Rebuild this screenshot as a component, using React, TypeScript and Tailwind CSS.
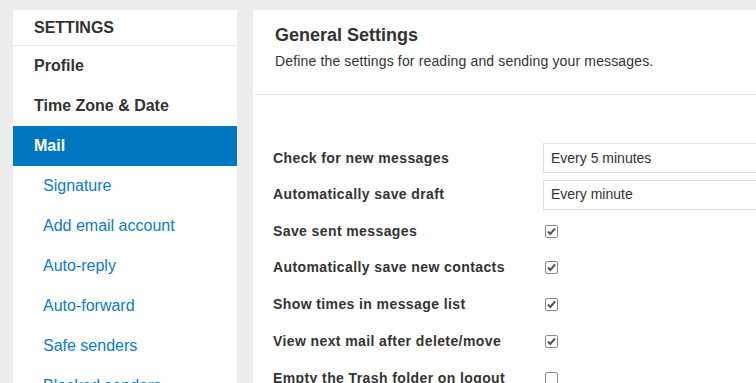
import React from "react";

const subItems = ["Signature", "Add email account", "Auto-reply", "Auto-forward", "Safe senders", "Blocked senders"];

function Check({ checked }: { checked: boolean }) {
  return (
    <div className="w-[13px] h-[13px] border border-[#8a8a8a] rounded-[2px] bg-white flex items-center justify-center">
      {checked && (
        <svg width="11" height="11" viewBox="0 0 11 11">
          <path d="M2 5.5 L4.3 8 L9 2.5" fill="none" stroke="#555" strokeWidth="2" />
        </svg>
      )}
    </div>
  );
}

export default function App() {
  const rows: { label: string; h: string; select?: string; checked?: boolean }[] = [
    { label: "Check for new messages", h: "h-[36px]", select: "Every 5 minutes" },
    { label: "Automatically save draft", h: "h-[37px]", select: "Every minute" },
    { label: "Save sent messages", h: "h-[36px]", checked: true },
    { label: "Automatically save new contacts", h: "h-[37px]", checked: true },
    { label: "Show times in message list", h: "h-[37px]", checked: true },
    { label: "View next mail after delete/move", h: "h-[37px]", checked: true },
    { label: "Empty the Trash folder on logout", h: "h-[37px]", checked: false },
  ];
  return (
    <div className="w-[756px] h-[383px] overflow-hidden bg-[#ececec] flex items-start pt-[10px] pl-[13px] gap-[16px] text-[#333]" style={{ fontFamily: '"Liberation Sans", Arial, sans-serif' }}>
      <div className="w-[224px] shrink-0 bg-white flex flex-col">
        <div className="shrink-0 h-[35px] border-b border-[#e3e3e3] pl-[21px] flex items-center text-[16px] font-bold box-content">SETTINGS</div>
        <div className="shrink-0 h-[40px] pl-[21px] flex items-center text-[16px] font-bold">Profile</div>
        <div className="shrink-0 h-[40px] pl-[21px] flex items-center text-[16px] font-bold">Time Zone &amp; Date</div>
        <div className="shrink-0 h-[40px] pl-[21px] flex items-center text-[16px] font-bold bg-[#0078c1] text-white">Mail</div>
        {subItems.map((s) => (
          <div key={s} className="shrink-0 h-[40px] pl-[30px] flex items-center text-[16px] text-[#0a7cc6]">{s}</div>
        ))}
      </div>
      <div className="flex-1 self-stretch bg-white flex flex-col">
        <div className="shrink-0 pl-[22px] pt-[14px] h-[84px]">
          <div className="text-[18px] font-bold leading-[22px]">General Settings</div>
          <div className="text-[14px] tracking-[0.15px] mt-[7px] leading-[17px]">Define the settings for reading and sending your messages.</div>
        </div>
        <div className="shrink-0 ml-[2px] h-px bg-[#e3e3e3]" />
        <div className="shrink-0 pt-[45px] pl-[20px] flex flex-col">
          {rows.map((r) => (
            <div key={r.label} className={`${r.h} shrink-0 flex items-center`}>
              <div className="w-[270px] text-[14px] tracking-[0.4px] font-bold">{r.label}</div>
              {r.select ? (
                <div className="flex-1 h-[30px] border border-[#e0e0e0] border-r-0 flex items-center pl-[7px] text-[14px]">{r.select}</div>
              ) : (
                <div className="pl-[2px]"><Check checked={!!r.checked} /></div>
              )}
            </div>
          ))}
        </div>
      </div>
    </div>
  );
}
